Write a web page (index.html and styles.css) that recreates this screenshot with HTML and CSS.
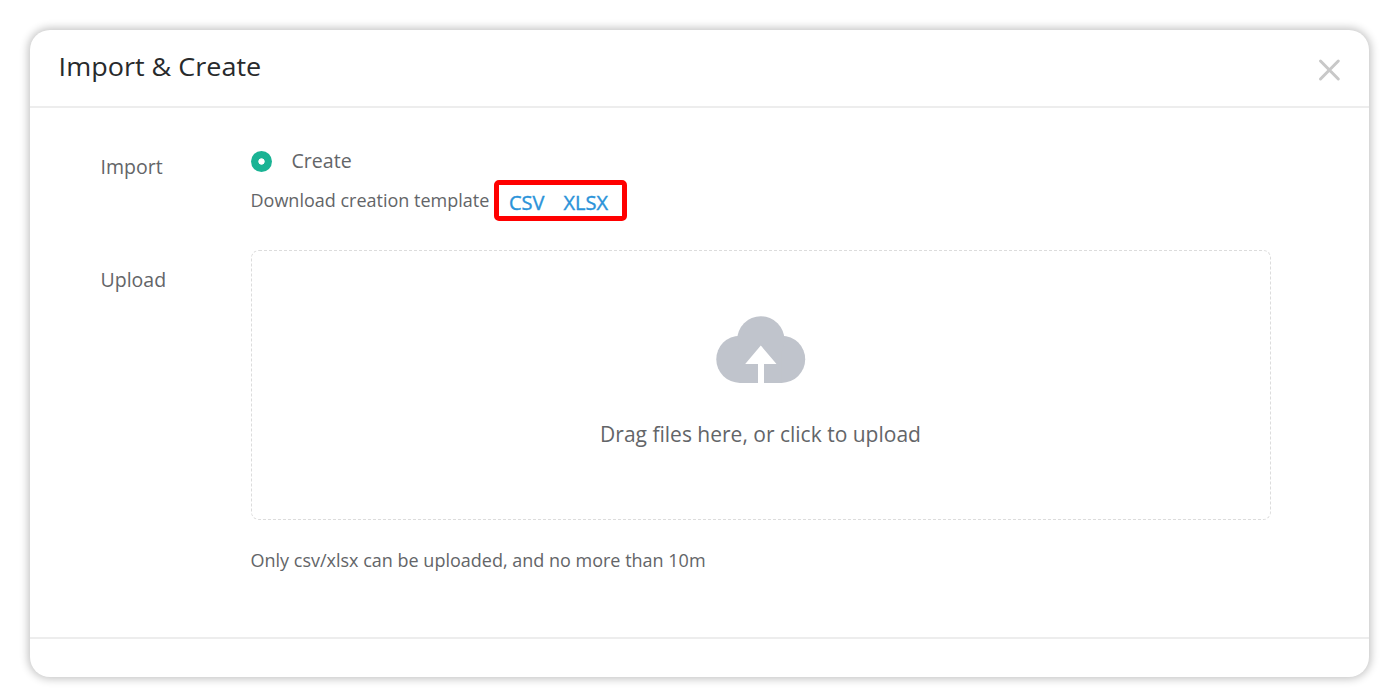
FILE: index.html
```html
<!DOCTYPE html>
<html lang="en">
<head>
<meta charset="utf-8">
<title>Import &amp; Create</title>
<link rel="stylesheet" href="styles.css">
</head>
<body>
<section class="dialog">
  <header class="dialog-header">
    <h1>Import &amp; Create</h1>
    <svg class="close" viewBox="0 0 22 22"><path d="M2.500 2 20.300 20M20.300 2 2.500 20"/></svg>
  </header>
  <main class="dialog-body">
    <div class="row import-row">
      <div class="label">Import</div>
      <div class="field">
        <label class="radio"><span class="radio-dot"></span><span class="radio-text">Create</span></label>
        <div class="template"><span class="template-text">Download creation template</span><span class="links"><a class="csv">CSV</a><a class="xlsx">XLSX</a></span></div>
      </div>
    </div>
    <div class="row">
      <div class="label upload-label">Upload</div>
      <div class="field">
        <div class="dropzone">
          <svg class="cloud" viewBox="0 0 90 68"><circle cx="23.900" cy="43.300" r="23.600"/><circle cx="65.600" cy="43.300" r="23.600"/><circle cx="44.800" cy="24" r="23.700"/><path d="M23.900 36H65.600V66.900H23.900Z"/><path class="arrow" d="M44.800 29.500 60.500 48H48V68H42V48H29.200Z"/></svg>
          <div class="drop-text">Drag files here, or click to upload</div>
        </div>
        <div class="hint">Only csv/xlsx can be uploaded, and no more than 10m</div>
      </div>
    </div>
  </main>
  <footer class="dialog-footer"></footer>
</section>
</body>
</html>
```
FILE: styles.css
```css
* { box-sizing: border-box; }
body { margin: 0; padding: 30px; height: 697px; background: #fff; color: #636568; font-family: "Open Sans", sans-serif; overflow: hidden; }
.dialog { width: 1339px; height: 647px; border-radius: 20px; background: #fff; box-shadow: 0 0 8px 2px rgba(0,0,0,.24); display: flex; flex-direction: column; }
.dialog-header { height: 78px; border-bottom: 2px solid #ededed; display: flex; justify-content: space-between; padding: 17px 29px 0 28.600px; }
h1 { margin: 0; font-size: 27px; line-height: 38px; height: 38px; transform: scaleY(.96); font-weight: 400; color: #282a2c; }
.close { width: 22px; height: 22px; margin-top: 12px; overflow: visible; fill: none; stroke: #c8c8c8; stroke-width: 3; stroke-linecap: round; }
.dialog-body { flex: 1; padding: 34px 98px 0 70.500px; }
.row { display: flex; }
.import-row { height: 108px; }
.label { width: 150.500px; font-size: 19.500px; line-height: 30px; padding-top: 10px; }
.field { width: 1020px; }
.radio { display: flex; align-items: center; gap: 20px; font-size: 19.600px; height: 38px; }
.radio-dot { width: 21px; height: 21px; border-radius: 50%; background: radial-gradient(circle, #fff 2.800px, #1ab394 3.500px); }
.radio-text { line-height: 28px; margin: 0 0 0 -.5px; }
.template { display: flex; height: 41px; }
.template-text { width: 243px; font-size: 18px; line-height: 41px; text-indent: -.5px; }
.links { width: 133px; height: 41px; border: 5px solid #f00; border-radius: 5px; display: flex; gap: 19px; padding-left: 10px; font-size: 20px; line-height: 35px; color: #2b93d9; -webkit-text-stroke: .4px #2b93d9; }
.upload-label { padding-top: 15px; }
.dropzone { height: 270px; border: 1px dashed #dcdcdc; border-radius: 8px; display: flex; flex-direction: column; align-items: center; padding-top: 65px; }
.cloud { width: 90px; height: 68px; fill: #c0c4cc; }
.arrow { fill: #fff; }
.drop-text { margin: 34px 1px 0 0; font-size: 21px; line-height: 32px; }
.hint { margin-top: 26px; font-size: 18px; line-height: 28px; text-indent: -.5px; }
.dialog-footer { height: 40px; border-top: 2px solid #ededed; }
```
